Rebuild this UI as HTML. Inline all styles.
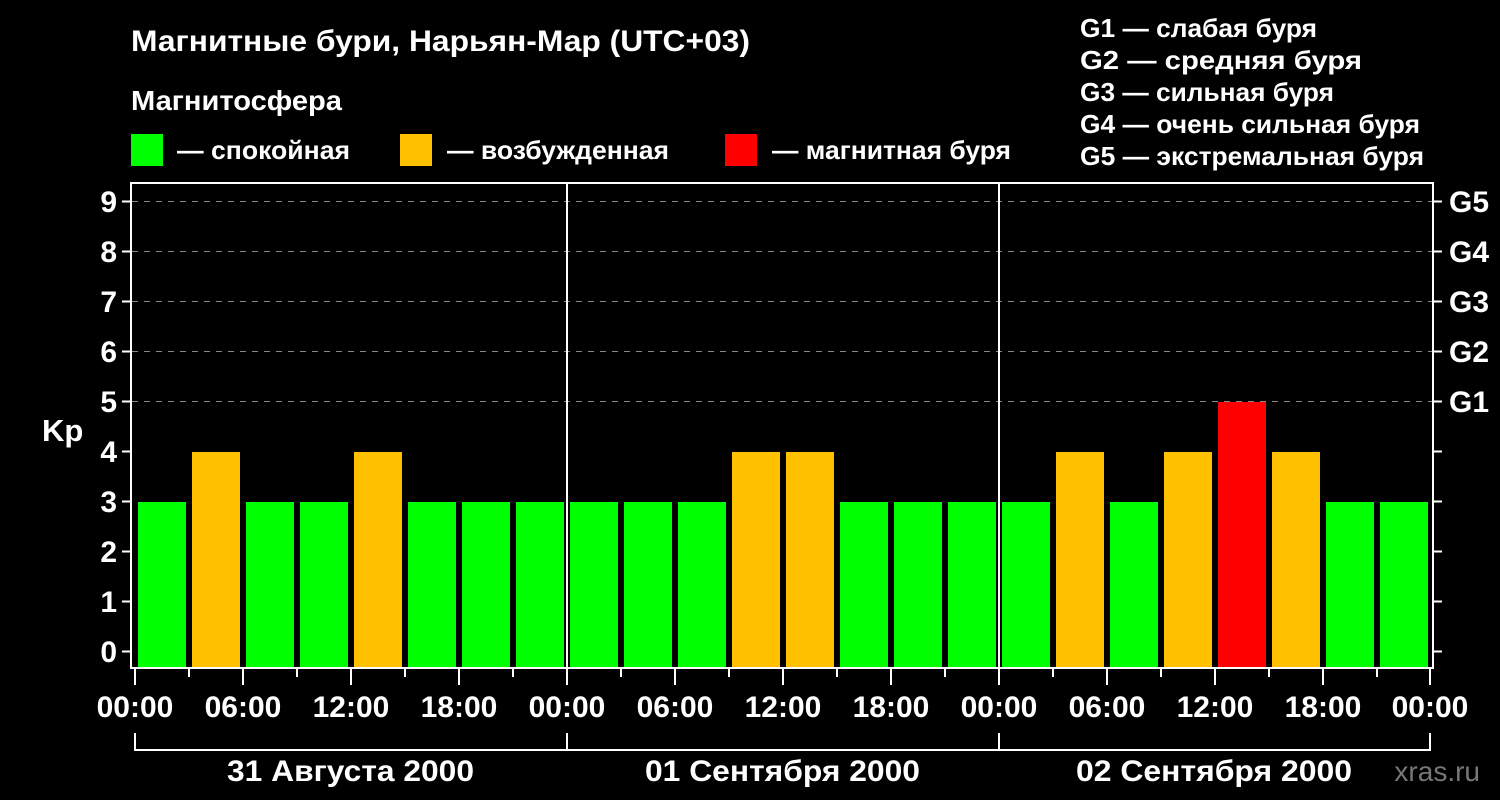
<!DOCTYPE html>
<html><head><meta charset="utf-8"><style>
html,body{margin:0;padding:0;background:#000;}
svg{display:block;font-family:"Liberation Sans",sans-serif;font-weight:bold;}
</style></head><body>
<svg width="1500" height="800" viewBox="0 0 1500 800">
<rect width="1500" height="800" fill="#000"/>
<g fill="#fff">
<text x="131" y="51" font-size="30" textLength="619" lengthAdjust="spacingAndGlyphs">Магнитные бури, Нарьян-Мар (UTC+03)</text>
<text x="131" y="110" font-size="28" textLength="211" lengthAdjust="spacingAndGlyphs">Магнитосфера</text>
<text x="177" y="159" font-size="26" textLength="173" lengthAdjust="spacingAndGlyphs">— спокойная</text>
<text x="447" y="159" font-size="26" textLength="222" lengthAdjust="spacingAndGlyphs">— возбужденная</text>
<text x="772" y="159" font-size="26" textLength="239" lengthAdjust="spacingAndGlyphs">— магнитная буря</text>
</g>
<rect x="131" y="134" width="32" height="32" fill="#00ff00"/>
<rect x="400" y="134" width="32" height="32" fill="#ffc000"/>
<rect x="725" y="134" width="32" height="32" fill="#ff0000"/>
<g fill="#fff" font-size="26">
<text x="1080" y="37" textLength="237" lengthAdjust="spacingAndGlyphs">G1 — слабая буря</text>
<text x="1080" y="69" textLength="282" lengthAdjust="spacingAndGlyphs">G2 — средняя буря</text>
<text x="1080" y="101" textLength="254" lengthAdjust="spacingAndGlyphs">G3 — сильная буря</text>
<text x="1080" y="133" textLength="340" lengthAdjust="spacingAndGlyphs">G4 — очень сильная буря</text>
<text x="1080" y="165" textLength="344" lengthAdjust="spacingAndGlyphs">G5 — экстремальная буря</text>
</g>
<g stroke="#888" stroke-width="1" stroke-dasharray="6,6">
<line x1="132" y1="201.5" x2="1432" y2="201.5"/>
<line x1="132" y1="251.5" x2="1432" y2="251.5"/>
<line x1="132" y1="301.5" x2="1432" y2="301.5"/>
<line x1="132" y1="351.5" x2="1432" y2="351.5"/>
<line x1="132" y1="401.5" x2="1432" y2="401.5"/>
</g>
<g>
<rect x="138" y="502" width="48" height="166" fill="#00ff00"/>
<rect x="192" y="452" width="48" height="216" fill="#ffc000"/>
<rect x="246" y="502" width="48" height="166" fill="#00ff00"/>
<rect x="300" y="502" width="48" height="166" fill="#00ff00"/>
<rect x="354" y="452" width="48" height="216" fill="#ffc000"/>
<rect x="408" y="502" width="48" height="166" fill="#00ff00"/>
<rect x="462" y="502" width="48" height="166" fill="#00ff00"/>
<rect x="516" y="502" width="48" height="166" fill="#00ff00"/>
<rect x="570" y="502" width="48" height="166" fill="#00ff00"/>
<rect x="624" y="502" width="48" height="166" fill="#00ff00"/>
<rect x="678" y="502" width="48" height="166" fill="#00ff00"/>
<rect x="732" y="452" width="48" height="216" fill="#ffc000"/>
<rect x="786" y="452" width="48" height="216" fill="#ffc000"/>
<rect x="840" y="502" width="48" height="166" fill="#00ff00"/>
<rect x="894" y="502" width="48" height="166" fill="#00ff00"/>
<rect x="948" y="502" width="48" height="166" fill="#00ff00"/>
<rect x="1002" y="502" width="48" height="166" fill="#00ff00"/>
<rect x="1056" y="452" width="48" height="216" fill="#ffc000"/>
<rect x="1110" y="502" width="48" height="166" fill="#00ff00"/>
<rect x="1164" y="452" width="48" height="216" fill="#ffc000"/>
<rect x="1218" y="402" width="48" height="266" fill="#ff0000"/>
<rect x="1272" y="452" width="48" height="216" fill="#ffc000"/>
<rect x="1326" y="502" width="48" height="166" fill="#00ff00"/>
<rect x="1380" y="502" width="48" height="166" fill="#00ff00"/>
</g>
<g stroke="#fff" stroke-width="2" fill="none">
<rect x="131" y="183" width="1302" height="485"/>
<line x1="567" y1="183" x2="567" y2="668"/>
<line x1="999" y1="183" x2="999" y2="668"/>
<path d="M122 201.5h9M122 251.5h9M122 301.5h9M122 351.5h9M122 401.5h9M122 451.5h9M122 501.5h9M122 551.5h9M122 601.5h9M122 651.5h9"/>
<path d="M1433 201.5h9M1433 251.5h9M1433 301.5h9M1433 351.5h9M1433 401.5h9M1433 451.5h9M1433 501.5h9M1433 551.5h9M1433 601.5h9M1433 651.5h9"/>
<path d="M135 668v17M189 668v9M243 668v17M297 668v9M351 668v17M405 668v9M459 668v17M513 668v9M567 668v17M621 668v9M675 668v17M729 668v9M783 668v17M837 668v9M891 668v17M945 668v9M999 668v17M1053 668v9M1107 668v17M1161 668v9M1215 668v17M1269 668v9M1323 668v17M1377 668v9M1430 668v17"/>
<path d="M135 733v17H1430V733M567 733v17M999 733v17"/>
</g>
<g fill="#fff" font-size="30" text-anchor="end">
<text x="117" y="212">9</text><text x="117" y="262">8</text><text x="117" y="312">7</text>
<text x="117" y="362">6</text><text x="117" y="412">5</text><text x="117" y="462">4</text>
<text x="117" y="512">3</text><text x="117" y="562">2</text><text x="117" y="612">1</text>
<text x="117" y="662">0</text>
</g>
<text x="42" y="441" fill="#fff" font-size="31">Kp</text>
<g fill="#fff" font-size="30">
<text x="1449" y="212">G5</text><text x="1449" y="262">G4</text><text x="1449" y="312">G3</text>
<text x="1449" y="362">G2</text><text x="1449" y="412">G1</text>
</g>
<g fill="#fff" font-size="30" text-anchor="middle">
<text x="135" y="717">00:00</text><text x="243" y="717">06:00</text><text x="351" y="717">12:00</text>
<text x="459" y="717">18:00</text><text x="567" y="717">00:00</text><text x="675" y="717">06:00</text>
<text x="783" y="717">12:00</text><text x="891" y="717">18:00</text><text x="999" y="717">00:00</text>
<text x="1107" y="717">06:00</text><text x="1215" y="717">12:00</text><text x="1323" y="717">18:00</text>
<text x="1430" y="717">00:00</text>
</g>
<g fill="#fff" font-size="30">
<text x="227" y="781" textLength="247" lengthAdjust="spacingAndGlyphs">31 Августа 2000</text>
<text x="645" y="781" textLength="275" lengthAdjust="spacingAndGlyphs">01 Сентября 2000</text>
<text x="1076" y="781" textLength="276" lengthAdjust="spacingAndGlyphs">02 Сентября 2000</text>
</g>
<text x="1480" y="781" fill="#777" font-size="28" text-anchor="end" font-weight="normal">xras.ru</text>
</svg>
</body></html>
